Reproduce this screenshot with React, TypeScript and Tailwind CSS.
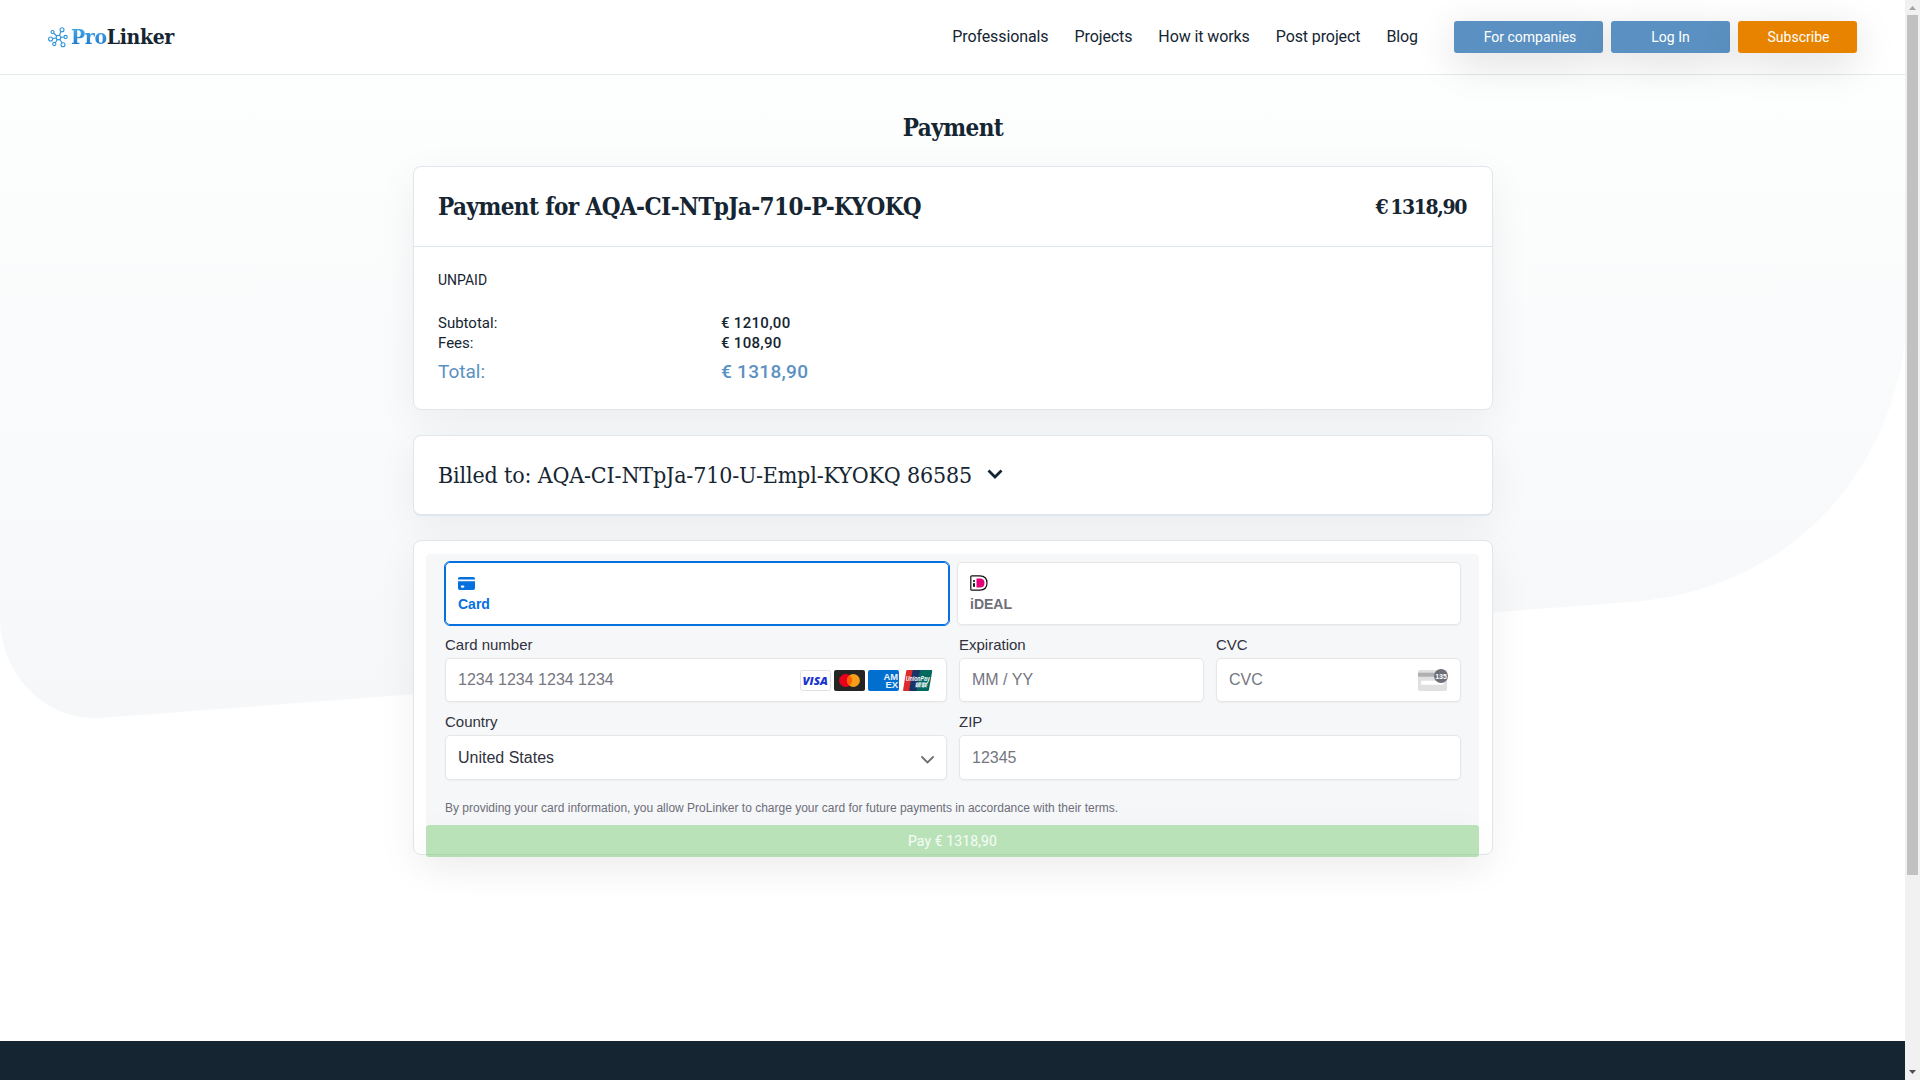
import type { ReactNode } from "react";

const slab = "font-['Roboto_Slab','DejaVu_Serif_Condensed','DejaVu_Serif',serif]";
const cardShell =
  "w-[1080px] rounded-lg border border-[#dfe7ec] bg-white shadow-[0_10px_40px_rgba(0,0,0,0.06)]";

function Backdrop() {
  return (
    <svg className="absolute left-0 top-0 h-[1080px] w-[1905px]" viewBox="0 0 1905 1080">
      <defs>
        <linearGradient id="sky" x1="0" y1="0" x2="0" y2="1">
          <stop offset="0" stopColor="#fdfefe" />
          <stop offset="0.15" stopColor="#fcfdfd" />
          <stop offset="1" stopColor="#f5f7f9" />
        </linearGradient>
      </defs>
      <path
        d="M0 75H1905V345C1885 483 1783 591 1630 602L100 718C43 721 0 672 0 618Z"
        fill="url(#sky)"
      />
    </svg>
  );
}

function Logo() {
  return (
    <div className="flex items-center">
      <svg className="h-[21px] w-5" viewBox="0 0 20 21" fill="none" stroke="#2f93dc" strokeWidth="1.1">
        <path d="M10.5 10.5 13 4.5M10.5 10.5 5.5 6M10.5 10.5 4 11.8M10.5 10.5 7 16.5M10.5 10.5 14.5 16.5M10.5 10.5 17 10" />
        <circle cx="14" cy="2.7" r="2" fill="#fff" />
        <circle cx="4.5" cy="5" r="1.5" fill="#fff" />
        <circle cx="2.6" cy="12" r="2" fill="#fff" />
        <circle cx="6.3" cy="17" r="1.6" fill="#fff" />
        <circle cx="15" cy="17.8" r="2" fill="#fff" />
        <circle cx="17.6" cy="10" r="1.6" fill="#fff" />
        <circle cx="10.5" cy="10.5" r="2.3" fill="#fff" />
      </svg>
      <div className={`${slab} ml-[3px] whitespace-nowrap text-[21px] font-bold leading-[26px] tracking-[-0.35px]`}>
        <span className="bg-linear-to-b from-[#4fb3ef] to-[#1670c8] bg-clip-text text-transparent">Pro</span>
        <span className="text-[#152532]">Linker</span>
      </div>
    </div>
  );
}

function Header() {
  const btn =
    "flex h-8 items-center justify-center rounded-[3px] text-sm text-white shadow-[0_10px_40px_rgba(0,0,0,0.14)]";
  return (
    <header className="relative flex h-[75px] items-start border-b border-[#e3e8ea] bg-white pl-12 pr-12">
      <div className="mt-6">
        <Logo />
      </div>
      <nav className="ml-auto mt-[25px] flex gap-[26px] text-base leading-6 tracking-[-0.1px] text-[#152532]">
        <span>Professionals</span>
        <span>Projects</span>
        <span>How it works</span>
        <span>Post project</span>
        <span>Blog</span>
      </nav>
      <div className="ml-9 mt-[21px] flex gap-2">
        <div className={`${btn} w-[149px] bg-[#5b91c2] pl-[3px]`}>For companies</div>
        <div className={`${btn} w-[119px] bg-[#5b91c2]`}>Log In</div>
        <div className={`${btn} w-[119px] bg-[#e88300] pl-[2px]`}>Subscribe</div>
      </div>
    </header>
  );
}

type FieldProps = { label: string; children: ReactNode; className: string; height?: string };

function Field({ label, children, className, height = "h-11" }: FieldProps) {
  return (
    <div className={className}>
      <div className="text-[15px] leading-[17px] text-[#30313d]">{label}</div>
      <div className={`${height} mt-[5px] flex items-center rounded-[5px] border border-[#e6e6e6] bg-white px-3 text-base text-[#757680] shadow-[0_1px_2px_rgba(0,0,0,0.04)]`}>
        {children}
      </div>
    </div>
  );
}

function CardBrands() {
  return (
    <div className="ml-auto mr-px mt-px flex gap-[3px]">
      <svg className="h-[21px] w-[31px]" viewBox="0 0 31 21">
        <rect x="0.5" y="0.5" width="30" height="20" rx="2" fill="#fff" stroke="#dfe0e6" />
        <text x="2.4" y="14.6" fontFamily="Open Sans, sans-serif" fontWeight="800" fontStyle="italic" fontSize="11" textLength="25.5" lengthAdjust="spacingAndGlyphs" fill="#1a34d0">VISA</text>
      </svg>
      <svg className="h-[21px] w-[31px]" viewBox="0 0 31 21">
        <rect width="31" height="21" rx="2" fill="#252525" />
        <circle cx="11.6" cy="10.5" r="6.5" fill="#eb001b" />
        <circle cx="19.4" cy="10.5" r="6.5" fill="#f79e1b" />
        <path d="M15.5 5.3a6.5 6.5 0 0 1 0 10.4 6.5 6.5 0 0 1 0-10.4Z" fill="#ff5f00" />
      </svg>
      <svg className="h-[21px] w-[31px]" viewBox="0 0 31 21">
        <rect width="31" height="21" rx="2" fill="#016fd0" />
        <g fontFamily="Liberation Sans, sans-serif" fontWeight="700" fontSize="9" fill="#e8f3fc">
          <text x="15.6" y="10" textLength="14.6" lengthAdjust="spacingAndGlyphs">AM</text>
          <text x="17.4" y="17.6" textLength="12.8" lengthAdjust="spacingAndGlyphs">EX</text>
        </g>
      </svg>
      <svg className="h-[21px] w-[31px]" viewBox="0 0 31 21">
        <path d="M5.5 0H14L9.5 21H2Q.8 21 1.1 19.7L4.2 1Q4.4 0 5.5 0Z" fill="#dd2a2a" />
        <path d="M11.5 0H21L17 21H8Q7 21 7.3 19.7L10.4 1Q10.6 0 11.5 0Z" fill="#183368" />
        <path d="M19 0H29.3Q30.4 0 30.2 1.2L27 19.8Q26.8 21 25.6 21H15.5Q14.4 21 14.7 19.7L17.9 1Q18 0 19 0Z" fill="#00695f" />
        <g fill="#fff" fontWeight="700" fontStyle="italic">
          <text x="3.8" y="10.8" fontFamily="Liberation Sans, sans-serif" fontSize="6.5" textLength="24" lengthAdjust="spacingAndGlyphs">UnionPay</text>
          <text x="12.5" y="17.3" fontFamily="Noto Sans CJK SC, sans-serif" fontSize="5.5" textLength="12.5" lengthAdjust="spacingAndGlyphs">银联</text>
        </g>
      </svg>
    </div>
  );
}

function CvcIcon() {
  return (
    <svg className="ml-auto h-6 w-[31px]" viewBox="0 0 31 24">
      <rect x="1" y="2" width="29" height="21" rx="2" fill="#e0e0e1" />
      <rect x="1" y="4.7" width="29" height="4" fill="#b0b0b4" />
      <rect x="4" y="12.7" width="23" height="4" rx="1" fill="#fff" />
      <circle cx="24" cy="8" r="7" fill="#6d6e78" />
      <text x="18.2" y="10.9" fontFamily="Liberation Sans, sans-serif" fontWeight="700" fontSize="8" textLength="11.8" lengthAdjust="spacingAndGlyphs" fill="#fff">135</text>
    </svg>
  );
}

function Summary() {
  return (
    <section className={`${cardShell} mt-6 h-[244px]`}>
      <div className={`${slab} flex h-20 items-center justify-between border-b border-[#dfe7ec] px-6 text-2xl font-bold text-[#152532]`}>
        <span className="whitespace-nowrap tracking-[-0.58px]">Payment for AQA-CI-NTpJa-710-P-KYOKQ</span>
        <span className="mr-[2px] whitespace-nowrap text-[21px] tracking-[-1.4px] [word-spacing:-2px]">€ 1318,90</span>
      </div>
      <div className="px-6 pt-[23px] text-[#152532]">
        <div className="text-sm leading-5">UNPAID</div>
        <div className="mt-[23px] grid grid-cols-[283px_1fr] text-[15px] leading-5">
          <span>Subtotal:</span>
          <span className="font-medium tracking-[0.3px]">€ 1210,00</span>
          <span>Fees:</span>
          <span className="font-medium tracking-[0.3px]">€ 108,90</span>
        </div>
        <div className="mt-[7px] grid grid-cols-[283px_1fr] text-[19px] leading-6 text-[#5b91c2]">
          <span>Total:</span>
          <span className="font-medium tracking-[0.3px]">€ 1318,90</span>
        </div>
      </div>
    </section>
  );
}

function BilledTo() {
  return (
    <section className={`${cardShell} mt-[25px] flex h-[81px] items-center border-b-2 px-6`}>
      <span className={`${slab} whitespace-nowrap text-[23px] tracking-[-0.16px] text-[#152532]`}>
        Billed to: AQA-CI-NTpJa-710-U-Empl-KYOKQ 86585
      </span>
      <svg className="mb-0.5 ml-[15px] h-[10px] w-4" viewBox="0 0 16 10" fill="none" stroke="#152532" strokeWidth="2.8">
        <path d="M1.5 1.5 8 8 14.5 1.5" />
      </svg>
    </section>
  );
}

function PaymentForm() {
  const tab = "flex h-[63px] w-[504px] flex-col rounded-[5px] border bg-white px-3 pt-3 text-sm font-bold leading-4";
  return (
    <section className={`${cardShell} mt-6 h-[315px] px-3 pt-[13px]`}>
      <div className="h-[271px] w-[1053px] rounded-t bg-[#f6f7f9] pl-[19px] pt-2 font-['Liberation_Sans',Arial,sans-serif]">
        <div className="flex gap-2">
          <div className={`${tab} border-[#0570de] text-[#0570de] outline-1 outline-[#0570de]`}>
            <svg className="mb-1.5 mt-0.5 h-[13px] w-[17px]" viewBox="0 0 17 13" fill="#0570de">
              <path d="M1.8 0H15.2Q17 0 17 1.8V2.6H0V1.8Q0 0 1.8 0Z" />
              <path fillRule="evenodd" d="M0 4.3H17V11.2Q17 13 15.2 13H1.8Q0 13 0 11.2ZM3.9 8.5a1.1 1.1 0 0 0 0 2.2H5.3a1.1 1.1 0 0 0 0-2.2Z" />
            </svg>
            Card
          </div>
          <div className={`${tab} border-[#e6e6e6] text-[#6d6e78] shadow-[0_1px_2px_rgba(0,0,0,0.04)]`}>
            <svg className="mb-[5px] h-4 w-[18px]" viewBox="0 0 18 16">
              <path d="M1.8.8H9.8C14.5.8 17 3.5 17 8S14.5 15.2 9.8 15.2H1.8Q.8 15.2.8 14.2V1.8Q.8.8 1.8.8Z" fill="#fff" stroke="#111" strokeWidth="1.2" />
              <path d="M6.5 3.5H10C13 3.5 14.5 5 14.5 8S13 12.5 10 12.5H6.5Z" fill="#e50079" />
              <circle cx="4" cy="6" r="1" />
              <rect x="3.1" y="8.2" width="1.8" height="3.6" />
            </svg>
            iDEAL
          </div>
        </div>
        <div className="mt-[11px] flex gap-3">
          <Field label="Card number" className="w-[502px]">
            1234 1234 1234 1234
            <CardBrands />
          </Field>
          <Field label="Expiration" className="w-[245px]">MM / YY</Field>
          <Field label="CVC" className="w-[245px]">
            CVC
            <CvcIcon />
          </Field>
        </div>
        <div className="mt-[11px] flex gap-3">
          <Field label="Country" className="w-[502px]" height="h-[45px]">
            <span className="text-[#30313d]">United States</span>
            <svg className="ml-auto mt-1 h-2 w-[13px]" viewBox="0 0 13 8" fill="none" stroke="#6d6e78" strokeWidth="1.8" strokeLinecap="round">
              <path d="M1 1 6.5 6.5 12 1" />
            </svg>
          </Field>
          <Field label="ZIP" className="w-[502px]" height="h-[45px]">12345</Field>
        </div>
        <div className="mt-[21px] text-xs leading-[15px] text-[#6d6e78]">
          By providing your card information, you allow ProLinker to charge your card for future payments in accordance with their terms.
        </div>
      </div>
      <div className="flex h-8 w-[1053px] items-center justify-center rounded-[3px] bg-[#8acf89]/60 text-sm tracking-[0.1px] text-white/90 shadow-[0_10px_40px_rgba(0,0,0,0.04)]">
        Pay € 1318,90
      </div>
    </section>
  );
}

function Scrollbar() {
  return (
    <aside className="flex h-[1080px] w-[15px] flex-col items-center bg-[#f1f1f1]">
      <svg className="h-[15px] w-[15px]" viewBox="0 0 15 15" fill="#a3a3a3">
        <path d="M4 10 7.5 6 11 10Z" />
      </svg>
      <div className="h-[860px] w-[11px] bg-[#c1c1c1]" />
      <svg className="mt-auto h-[15px] w-[15px]" viewBox="0 0 15 15" fill="#505050">
        <path d="M4 5 7.5 9 11 5Z" />
      </svg>
    </aside>
  );
}

export default function App() {
  return (
    <div className="flex h-[1080px] w-[1920px] overflow-hidden bg-white font-['Roboto',sans-serif]">
      <div className="relative flex h-[1080px] w-[1905px] flex-col">
        <Backdrop />
        <Header />
        <main className="relative flex flex-col items-center pl-px">
          <h1 className={`${slab} mt-[39px] text-2xl font-bold leading-7 tracking-[-0.55px] text-[#152532]`}>Payment</h1>
          <Summary />
          <BilledTo />
          <PaymentForm />
        </main>
        <footer className="relative mt-auto h-[39px] bg-[#152532]" />
      </div>
      <Scrollbar />
    </div>
  );
}
